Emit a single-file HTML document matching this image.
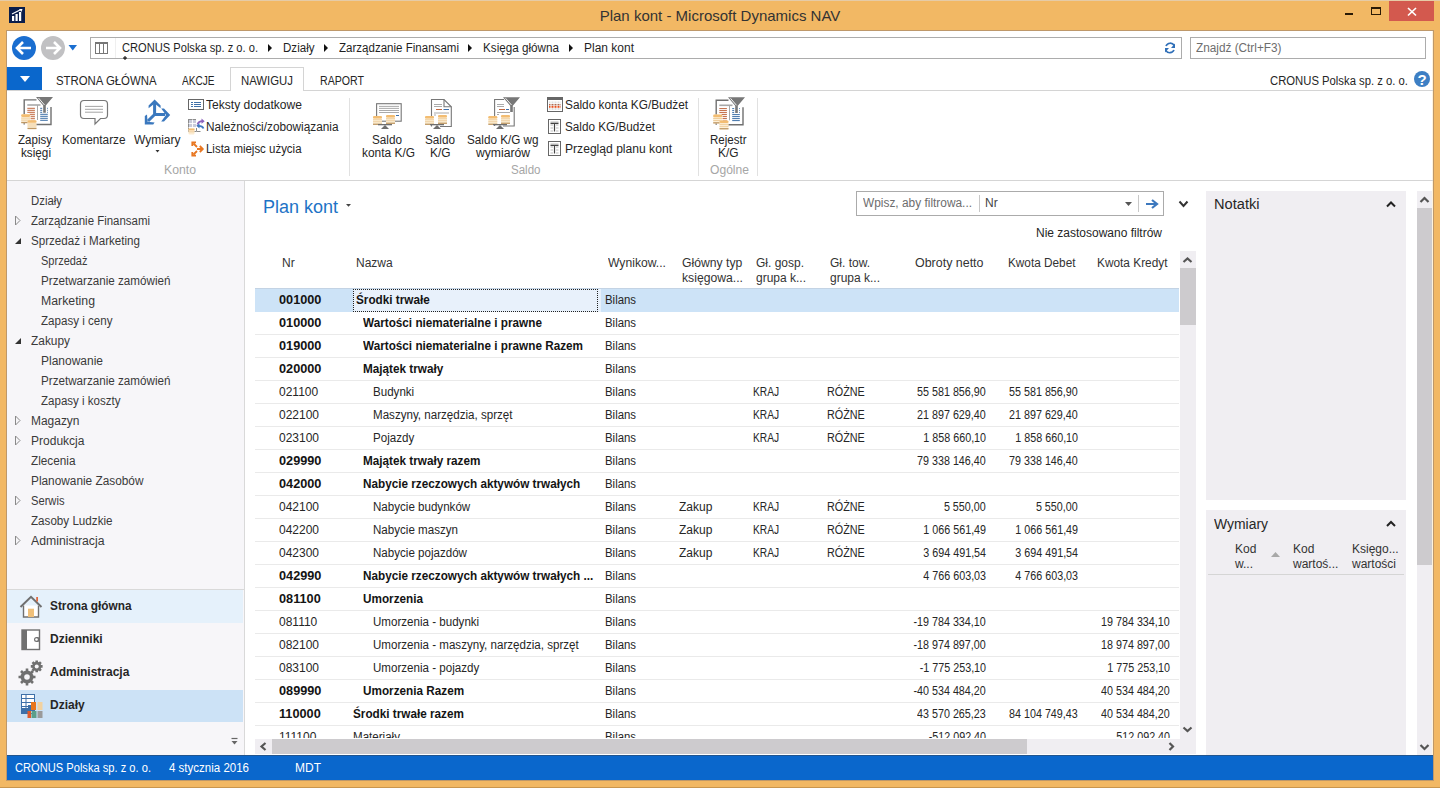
<!DOCTYPE html>
<html><head><meta charset="utf-8">
<style>
*{box-sizing:border-box;margin:0;padding:0}
html,body{width:1440px;height:788px;overflow:hidden}
body{background:#F2B864;font-family:"Liberation Sans",sans-serif;font-size:12px;color:#262626;position:relative}
.a{position:absolute;white-space:nowrap}
#topline{left:0;top:0;width:1440px;height:1px;background:#E6CBA6}
#botline{left:0;top:787px;width:1440px;height:1px;background:#C9964F}
#win{left:7px;top:31px;width:1426px;height:749px;background:#fff}
#title{left:0;top:7px;width:1440px;text-align:center;font-size:15px;color:#333}
#close{left:1389px;top:1px;width:45px;height:20px;background:#D3594E}
/* address */
#addr{left:90px;top:37px;width:1092px;height:22px;border:1px solid #ACACAC;background:#fff}
#search{left:1190px;top:37px;width:236px;height:22px;border:1px solid #ACACAC;background:#fff;color:#6D6D6D;padding:3px 0 0 6px}
.crumb{top:41px;color:#1F1F1F}
/* ribbon */
#tabline{left:7px;top:90px;width:1426px;height:1px;background:#D4D4D4}
#acttab{left:230px;top:67px;width:74px;height:24px;border:1px solid #D4D4D4;border-bottom:none;background:#fff}
.tab{top:74px;color:#262626;font-size:12px}
#ribbtn{left:7px;top:67px;width:35px;height:23px;background:#0A67CC}
#ribbot{left:7px;top:180px;width:1426px;height:1px;background:#D5D5D5}
.rsep{top:98px;width:1px;height:78px;background:#E1E1E1}
.glabel{top:163px;color:#A6A6A6}
.blabel{text-align:center;line-height:13px;color:#262626}
.slabel{color:#262626}
/* nav */
#nav{left:7px;top:181px;width:237px;height:574px;background:#F7F6F9}
#navline{left:244px;top:181px;width:1px;height:574px;background:#D9D9D9}
.ni{color:#3A3A3A}
.nb{font-weight:bold;color:#262626}
/* status */
#status{left:7px;top:755px;width:1426px;height:25px;background:#0A67CC;color:#fff}
/* grid */
.row{left:255px;width:924px;height:23px;border-top:1px solid #EAEAEA}
.c{position:absolute;top:4px;white-space:nowrap}
.b{font-weight:bold;color:#141414}
.num{transform:scaleX(0.895);transform-origin:100% 0}
.fb{background:#F0EEF2}
.sx{transform-origin:0 0}
.nm{transform:scaleX(0.965);transform-origin:0 0}
.nm.b{transform:scaleX(0.978)}
.code.b{transform:scaleX(1.06);transform-origin:0 0}
.hd{color:#333;line-height:15px}
.glabel{top:163px}
#w1{transform:scaleX(0.9269);transform-origin:0 0}
#w2{transform:scaleX(0.9641);transform-origin:0 0}
#w3{transform:scaleX(0.9620);transform-origin:0 0}
#w4{transform:scaleX(0.9736);transform-origin:0 0}
#w5{transform:scaleX(0.9991);transform-origin:0 0}
#w6{transform:scaleX(0.9824);transform-origin:0 0}
#w7{transform:scaleX(0.9480);transform-origin:0 0}
#w8{transform:scaleX(0.8401);transform-origin:0 0}
#w9{transform:scaleX(0.9473);transform-origin:0 0}
#w10{transform:scaleX(0.8836);transform-origin:0 0}
#w11{transform:scaleX(0.9406);transform-origin:0 0}
#w12{transform:scaleX(0.9620);transform-origin:0 0}
#w13{transform:scaleX(0.9776);transform-origin:0 0}
#w14{transform:scaleX(0.9814);transform-origin:0 0}
#w15{transform:scaleX(0.9987);transform-origin:0 0}
#w16{transform:scaleX(1.0064);transform-origin:0 0}
#w17{transform:scaleX(0.9833);transform-origin:0 0}
#w18{transform:scaleX(0.9547);transform-origin:0 0}
#w19{transform:scaleX(1.0204);transform-origin:0 0}
#w20{transform:scaleX(0.9771);transform-origin:0 0}
#w21{transform:scaleX(0.9930);transform-origin:0 0}
#w22{transform:scaleX(0.9771);transform-origin:0 0}
#w23{transform:scaleX(0.9917);transform-origin:0 0}
#w24{transform:scaleX(0.9744);transform-origin:0 0}
#w25{transform:scaleX(1.0123);transform-origin:0 0}
#w26{transform:scaleX(0.9860);transform-origin:0 0}
#w27{transform:scaleX(0.9776);transform-origin:0 0}
#w28{transform:scaleX(1.0087);transform-origin:0 0}
#w29{transform:scaleX(0.9608);transform-origin:0 0}
#w30{transform:scaleX(0.9601);transform-origin:0 0}
#w31{transform:scaleX(0.9917);transform-origin:0 0}
#w32{transform:scaleX(1.0077);transform-origin:0 0}
#w33{transform:scaleX(0.9488);transform-origin:0 0}
#w34{transform:scaleX(0.9540);transform-origin:0 0}
#w35{transform:scaleX(0.9670);transform-origin:0 0}
#w36{transform:scaleX(0.9171);transform-origin:0 0}
#w37{transform:scaleX(0.9708);transform-origin:0 0}
#w38{transform:scaleX(1.0249);transform-origin:0 0}
#w39{transform:scaleX(0.9656);transform-origin:0 0}
#w40{transform:scaleX(0.9909);transform-origin:0 0}
#w41{transform:scaleX(0.9992);transform-origin:0 0}
#w42{transform:scaleX(0.9708);transform-origin:0 0}
#w43{transform:scaleX(0.9613);transform-origin:0 0}
#w44{transform:scaleX(0.9958);transform-origin:0 0}
#w45{transform:scaleX(1.0023);transform-origin:0 0}
#w46{transform:scaleX(0.9811);transform-origin:0 0}
#w47{transform:scaleX(0.9862);transform-origin:0 0}
#w48{transform:scaleX(0.9302);transform-origin:0 0}
#w49{transform:scaleX(0.9697);transform-origin:0 0}
#w50{transform:scaleX(1.0204);transform-origin:0 0}
#w51{transform:scaleX(0.9858);transform-origin:0 0}
#w52{transform:scaleX(0.9269);transform-origin:0 0}
#w53{transform:scaleX(0.9593);transform-origin:0 0}
#w54{transform:scaleX(0.9906);transform-origin:0 0}
#w55{transform:scaleX(0.9995);transform-origin:0 0}
#w56{transform:scaleX(1.0131);transform-origin:0 0}
#w57{transform:scaleX(1.0161);transform-origin:0 0}
#w58{transform:scaleX(0.9994);transform-origin:0 0}
#w59{transform:scaleX(0.9994);transform-origin:0 0}
#w60{transform:scaleX(1.0371);transform-origin:0 0}
#w61{transform:scaleX(0.9823);transform-origin:0 0}
#w62{transform:scaleX(0.9877);transform-origin:0 0}
#w63{transform:scaleX(1.0441);transform-origin:0 0}
#w64{transform:scaleX(0.9942);transform-origin:0 0}
</style></head><body>
<div class="a" id="topline"></div>
<div class="a" id="botline"></div>
<div class="a" style="left:6px;top:30px;width:1428px;height:751px;background:#BE986A"></div>
<div class="a" id="win"></div>
<div class="a" style="left:1432px;top:31px;width:1px;height:749px;background:#FFF3DC"></div>
<!-- title bar -->
<div class="a" id="title">Plan kont - Microsoft Dynamics NAV</div>
<div class="a" style="left:1345px;top:13px;width:8px;height:2px;background:#2A1A05"></div>
<div class="a" style="left:1371px;top:7px;width:10px;height:8px;border:1px solid #2A1A05;border-top-width:2px"></div>
<div class="a" id="close"></div>

<!-- address bar -->
<div class="a" id="addr"></div>
<div class="a" style="left:115px;top:38px;width:1px;height:20px;background:#EFEFEF"></div>
<div class="a crumb" style="left:122px" id="w1">CRONUS Polska sp. z o. o.</div>
<div class="a crumb" style="left:283px" id="w2">Działy</div>
<div class="a crumb" style="left:339px" id="w3">Zarządzanie Finansami</div>
<div class="a crumb" style="left:483px" id="w4">Księga główna</div>
<div class="a crumb" style="left:584px" id="w5">Plan kont</div>
<div class="a" id="search"></div>
<div class="a" style="left:1196px;top:41px;color:#6D6D6D" id="w6">Znajdź (Ctrl+F3)</div>

<!-- ribbon tabs -->
<div class="a" id="tabline"></div>
<div class="a" id="acttab"></div>
<div class="a" id="ribbtn"></div>
<div class="a tab" style="left:56px" id="w7">STRONA GŁÓWNA</div>
<div class="a tab" style="left:182px" id="w8">AKCJE</div>
<div class="a tab" style="left:241px" id="w9">NAWIGUJ</div>
<div class="a tab" style="left:320px" id="w10">RAPORT</div>
<div class="a" style="left:1270px;top:74px;color:#262626" id="w11">CRONUS Polska sp. z o. o.</div>

<!-- ribbon content -->
<div class="a" id="ribbot"></div>
<div class="a rsep" style="left:349px"></div>
<div class="a rsep" style="left:698px"></div>
<div class="a rsep" style="left:757px"></div>
<div class="a blabel" style="left:18px;top:134px" id="w12">Zapisy</div>
<div class="a blabel" style="left:21px;top:147px" id="w13">księgi</div>
<div class="a blabel" style="left:62px;top:134px" id="w14">Komentarze</div>
<div class="a blabel" style="left:134px;top:134px" id="w15">Wymiary</div>
<div class="a slabel" style="left:206px;top:98px" id="w16">Teksty dodatkowe</div>
<div class="a slabel" style="left:206px;top:120px" id="w17">Należności/zobowiązania</div>
<div class="a slabel" style="left:206px;top:142px" id="w18">Lista miejsc użycia</div>
<div class="a glabel" style="left:163.5px" id="w19">Konto</div>

<div class="a blabel" style="left:372px;top:134px" id="w20">Saldo</div>
<div class="a blabel" style="left:361.5px;top:147px" id="w21">konta K/G</div>
<div class="a blabel" style="left:425px;top:134px" id="w22">Saldo</div>
<div class="a blabel" style="left:430px;top:147px" id="w23">K/G</div>
<div class="a blabel" style="left:466.5px;top:134px" id="w24">Saldo K/G wg</div>
<div class="a blabel" style="left:475.5px;top:147px" id="w25">wymiarów</div>
<div class="a slabel" style="left:565px;top:98px" id="w26">Saldo konta KG/Budżet</div>
<div class="a slabel" style="left:565px;top:120px" id="w27">Saldo KG/Budżet</div>
<div class="a slabel" style="left:565px;top:142px" id="w28">Przegląd planu kont</div>
<div class="a glabel" style="left:511px" id="w29">Saldo</div>

<div class="a blabel" style="left:710px;top:134px" id="w30">Rejestr</div>
<div class="a blabel" style="left:718px;top:147px" id="w31">K/G</div>
<div class="a glabel" style="left:710px" id="w32">Ogólne</div>

<!-- nav pane -->
<div class="a" id="nav"></div>
<div class="a" id="navline"></div>
<div class="a ni" style="left:31px;top:194px" id="w33">Działy</div>
<div class="a ni" style="left:31px;top:214px" id="w34">Zarządzanie Finansami</div>
<div class="a ni" style="left:31px;top:234px" id="w35">Sprzedaż i Marketing</div>
<div class="a ni" style="left:41px;top:254px" id="w36">Sprzedaż</div>
<div class="a ni" style="left:41px;top:274px" id="w37">Przetwarzanie zamówień</div>
<div class="a ni" style="left:41px;top:294px" id="w38">Marketing</div>
<div class="a ni" style="left:41px;top:314px" id="w39">Zapasy i ceny</div>
<div class="a ni" style="left:31px;top:334px" id="w40">Zakupy</div>
<div class="a ni" style="left:41px;top:354px" id="w41">Planowanie</div>
<div class="a ni" style="left:41px;top:374px" id="w42">Przetwarzanie zamówień</div>
<div class="a ni" style="left:41px;top:394px" id="w43">Zapasy i koszty</div>
<div class="a ni" style="left:31px;top:414px" id="w44">Magazyn</div>
<div class="a ni" style="left:31px;top:434px" id="w45">Produkcja</div>
<div class="a ni" style="left:31px;top:454px" id="w46">Zlecenia</div>
<div class="a ni" style="left:31px;top:474px" id="w47">Planowanie Zasobów</div>
<div class="a ni" style="left:31px;top:494px" id="w48">Serwis</div>
<div class="a ni" style="left:31px;top:514px" id="w49">Zasoby Ludzkie</div>
<div class="a ni" style="left:31px;top:534px" id="w50">Administracja</div>

<div class="a" style="left:7px;top:589px;width:237px;height:1px;background:#D9D9D9"></div>
<div class="a" style="left:7px;top:590px;width:236px;height:33px;background:#E5F1FB"></div>
<div class="a" style="left:7px;top:690px;width:236px;height:32px;background:#CCE2F6"></div>
<div class="a nb" style="left:50px;top:599px" id="w51">Strona główna</div>
<div class="a nb" style="left:50px;top:632px">Dzienniki</div>
<div class="a nb" style="left:50px;top:665px">Administracja</div>
<div class="a nb" style="left:50px;top:698px">Działy</div>

<!-- status bar -->
<div class="a" id="status"></div>
<div class="a" style="left:7px;top:755px;width:1426px;height:1px;background:#21558F"></div>
<div class="a" style="left:15px;top:761px;color:#fff" id="w52">CRONUS Polska sp. z o. o.</div>
<div class="a" style="left:169px;top:761px;color:#fff" id="w53">4 stycznia 2016</div>
<div class="a" style="left:295px;top:761px;color:#fff">MDT</div>

<!-- page header -->
<div class="a" style="left:263px;top:197px;font-size:18px;color:#1E73C6">Plan kont</div>
<div class="a" style="left:856px;top:191px;width:308px;height:25px;border:1px solid #ABABAB;background:#fff"></div>
<div class="a" style="left:979px;top:195px;width:1px;height:17px;background:#C8C8C8"></div>
<div class="a" style="left:1138px;top:195px;width:1px;height:17px;background:#C8C8C8"></div>
<div class="a" style="left:863px;top:196px;color:#6D6D6D" id="w54">Wpisz, aby filtrowa...</div>
<div class="a" style="left:985px;top:196px;color:#444">Nr</div>
<div class="a" style="left:1036px;top:226px;color:#262626" id="w55">Nie zastosowano filtrów</div>

<!-- column headers -->
<div class="a hd" style="left:282px;top:256px">Nr</div>
<div class="a hd" style="left:356px;top:256px">Nazwa</div>
<div class="a hd" style="left:608px;top:256px" id="w56">Wynikow...</div>
<div class="a hd" style="left:682px;top:256px" id="w57">Główny typ<br>księgowa...</div>
<div class="a hd" style="left:756px;top:256px" id="w58">Gł. gosp.<br>grupa k...</div>
<div class="a hd" style="left:830px;top:256px" id="w59">Gł. tow.<br>grupa k...</div>
<div class="a hd" style="left:915px;top:256px" id="w60">Obroty netto</div>
<div class="a hd" style="left:1008px;top:256px" id="w61">Kwota Debet</div>
<div class="a hd" style="left:1097px;top:256px" id="w62">Kwota Kredyt</div>

<!-- grid scrollbars -->
<div class="a" style="left:1180px;top:251px;width:16px;height:488px;background:#F0EEF2"></div>
<div class="a" style="left:1180px;top:268px;width:16px;height:57px;background:#CDCBCE"></div>
<div class="a" style="left:255px;top:739px;width:941px;height:15px;background:#F0EEF2"></div>
<div class="a" style="left:272px;top:739px;width:755px;height:15px;background:#CDCBCE"></div>

<!-- factboxes -->
<div class="a fb" style="left:1206px;top:191px;width:200px;height:309px"></div>
<div class="a fb" style="left:1206px;top:510px;width:200px;height:245px"></div>
<div class="a" style="left:1214px;top:196px;font-size:14px;color:#262626" id="w63">Notatki</div>
<div class="a" style="left:1214px;top:516px;font-size:14px;color:#262626" id="w64">Wymiary</div>
<div class="a" style="left:1235px;top:542px;line-height:15px;color:#333">Kod<br>w...</div>
<div class="a" style="left:1293px;top:542px;line-height:15px;color:#333">Kod<br>wartoś...</div>
<div class="a" style="left:1352px;top:542px;line-height:15px;color:#333">Księgo...<br>wartości</div>
<div class="a" style="left:1208px;top:574px;width:196px;height:1px;background:#D5D5D5"></div>
<div class="a" style="left:1417px;top:191px;width:15px;height:564px;background:#F0EEF2"></div>
<div class="a" style="left:1417px;top:208px;width:15px;height:357px;background:#CDCBCE"></div>
<div class="a" id="gridclip" style="left:255px;top:288px;width:924px;height:450px;overflow:hidden">
<div class="a row" style="left:0;top:437px;"><span class="c code" style="left:24px">111100</span><span class="c nm" style="left:98px">Materiały</span><span class="c sx" style="left:350px;transform:scaleX(0.95)">Bilans</span><span class="c num" style="right:193px">-512 092,40</span><span class="c num" style="right:9px">512 092,40</span></div>
<div class="a row" style="left:0;top:414px;"><span class="c b code" style="left:24px">110000</span><span class="c b nm" style="left:98px">Środki trwałe razem</span><span class="c sx" style="left:350px;transform:scaleX(0.95)">Bilans</span><span class="c num" style="right:193px">43 570 265,23</span><span class="c num" style="right:101px">84 104 749,43</span><span class="c num" style="right:9px">40 534 484,20</span></div>
<div class="a row" style="left:0;top:391px;"><span class="c b code" style="left:24px">089990</span><span class="c b nm" style="left:108px">Umorzenia Razem</span><span class="c sx" style="left:350px;transform:scaleX(0.95)">Bilans</span><span class="c num" style="right:193px">-40 534 484,20</span><span class="c num" style="right:9px">40 534 484,20</span></div>
<div class="a row" style="left:0;top:368px;"><span class="c code" style="left:24px">083100</span><span class="c nm" style="left:118px">Umorzenia - pojazdy</span><span class="c sx" style="left:350px;transform:scaleX(0.95)">Bilans</span><span class="c num" style="right:193px">-1 775 253,10</span><span class="c num" style="right:9px">1 775 253,10</span></div>
<div class="a row" style="left:0;top:345px;"><span class="c code" style="left:24px">082100</span><span class="c nm" style="left:118px">Umorzenia - maszyny, narzędzia, sprzęt</span><span class="c sx" style="left:350px;transform:scaleX(0.95)">Bilans</span><span class="c num" style="right:193px">-18 974 897,00</span><span class="c num" style="right:9px">18 974 897,00</span></div>
<div class="a row" style="left:0;top:322px;"><span class="c code" style="left:24px">081110</span><span class="c nm" style="left:118px">Umorzenia - budynki</span><span class="c sx" style="left:350px;transform:scaleX(0.95)">Bilans</span><span class="c num" style="right:193px">-19 784 334,10</span><span class="c num" style="right:9px">19 784 334,10</span></div>
<div class="a row" style="left:0;top:299px;"><span class="c b code" style="left:24px">081100</span><span class="c b nm" style="left:108px">Umorzenia</span><span class="c sx" style="left:350px;transform:scaleX(0.95)">Bilans</span></div>
<div class="a row" style="left:0;top:276px;"><span class="c b code" style="left:24px">042990</span><span class="c b nm" style="left:108px">Nabycie rzeczowych aktywów trwałych ...</span><span class="c sx" style="left:350px;transform:scaleX(0.95)">Bilans</span><span class="c num" style="right:193px">4 766 603,03</span><span class="c num" style="right:101px">4 766 603,03</span></div>
<div class="a row" style="left:0;top:253px;"><span class="c code" style="left:24px">042300</span><span class="c nm" style="left:118px">Nabycie pojazdów</span><span class="c sx" style="left:350px;transform:scaleX(0.95)">Bilans</span><span class="c" style="left:424px">Zakup</span><span class="c sx" style="left:498px;transform:scaleX(0.85)">KRAJ</span><span class="c sx" style="left:572px;transform:scaleX(0.9)">RÓŻNE</span><span class="c num" style="right:193px">3 694 491,54</span><span class="c num" style="right:101px">3 694 491,54</span></div>
<div class="a row" style="left:0;top:230px;"><span class="c code" style="left:24px">042200</span><span class="c nm" style="left:118px">Nabycie maszyn</span><span class="c sx" style="left:350px;transform:scaleX(0.95)">Bilans</span><span class="c" style="left:424px">Zakup</span><span class="c sx" style="left:498px;transform:scaleX(0.85)">KRAJ</span><span class="c sx" style="left:572px;transform:scaleX(0.9)">RÓŻNE</span><span class="c num" style="right:193px">1 066 561,49</span><span class="c num" style="right:101px">1 066 561,49</span></div>
<div class="a row" style="left:0;top:207px;"><span class="c code" style="left:24px">042100</span><span class="c nm" style="left:118px">Nabycie budynków</span><span class="c sx" style="left:350px;transform:scaleX(0.95)">Bilans</span><span class="c" style="left:424px">Zakup</span><span class="c sx" style="left:498px;transform:scaleX(0.85)">KRAJ</span><span class="c sx" style="left:572px;transform:scaleX(0.9)">RÓŻNE</span><span class="c num" style="right:193px">5 550,00</span><span class="c num" style="right:101px">5 550,00</span></div>
<div class="a row" style="left:0;top:184px;"><span class="c b code" style="left:24px">042000</span><span class="c b nm" style="left:108px">Nabycie rzeczowych aktywów trwałych</span><span class="c sx" style="left:350px;transform:scaleX(0.95)">Bilans</span></div>
<div class="a row" style="left:0;top:161px;"><span class="c b code" style="left:24px">029990</span><span class="c b nm" style="left:108px">Majątek trwały razem</span><span class="c sx" style="left:350px;transform:scaleX(0.95)">Bilans</span><span class="c num" style="right:193px">79 338 146,40</span><span class="c num" style="right:101px">79 338 146,40</span></div>
<div class="a row" style="left:0;top:138px;"><span class="c code" style="left:24px">023100</span><span class="c nm" style="left:118px">Pojazdy</span><span class="c sx" style="left:350px;transform:scaleX(0.95)">Bilans</span><span class="c sx" style="left:498px;transform:scaleX(0.85)">KRAJ</span><span class="c sx" style="left:572px;transform:scaleX(0.9)">RÓŻNE</span><span class="c num" style="right:193px">1 858 660,10</span><span class="c num" style="right:101px">1 858 660,10</span></div>
<div class="a row" style="left:0;top:115px;"><span class="c code" style="left:24px">022100</span><span class="c nm" style="left:118px">Maszyny, narzędzia, sprzęt</span><span class="c sx" style="left:350px;transform:scaleX(0.95)">Bilans</span><span class="c sx" style="left:498px;transform:scaleX(0.85)">KRAJ</span><span class="c sx" style="left:572px;transform:scaleX(0.9)">RÓŻNE</span><span class="c num" style="right:193px">21 897 629,40</span><span class="c num" style="right:101px">21 897 629,40</span></div>
<div class="a row" style="left:0;top:92px;"><span class="c code" style="left:24px">021100</span><span class="c nm" style="left:118px">Budynki</span><span class="c sx" style="left:350px;transform:scaleX(0.95)">Bilans</span><span class="c sx" style="left:498px;transform:scaleX(0.85)">KRAJ</span><span class="c sx" style="left:572px;transform:scaleX(0.9)">RÓŻNE</span><span class="c num" style="right:193px">55 581 856,90</span><span class="c num" style="right:101px">55 581 856,90</span></div>
<div class="a row" style="left:0;top:69px;"><span class="c b code" style="left:24px">020000</span><span class="c b nm" style="left:108px">Majątek trwały</span><span class="c sx" style="left:350px;transform:scaleX(0.95)">Bilans</span></div>
<div class="a row" style="left:0;top:46px;"><span class="c b code" style="left:24px">019000</span><span class="c b nm" style="left:108px">Wartości niematerialne i prawne Razem</span><span class="c sx" style="left:350px;transform:scaleX(0.95)">Bilans</span></div>
<div class="a row" style="left:0;top:23px;"><span class="c b code" style="left:24px">010000</span><span class="c b nm" style="left:108px">Wartości niematerialne i prawne</span><span class="c sx" style="left:350px;transform:scaleX(0.95)">Bilans</span></div>
<div class="a row" style="left:0;top:0px;background:#CDE3F7;height:24px;border-top-color:#C3D3E4;"><span class="c b code" style="left:24px">001000</span><div class="a" style="left:98px;top:0;width:248px;height:23px;background:#E8F1FB"></div><div class="a" style="left:98px;top:0;width:245px;height:23px;border:1px dotted #222"></div><span class="c b nm" style="left:101px">Środki trwałe</span><span class="c sx" style="left:350px;transform:scaleX(0.95)">Bilans</span></div>
</div><svg class="a" style="left:0;top:0" width="1440" height="788" viewBox="0 0 1440 788">


<!-- title bar icon -->
<rect x="9" y="7" width="16" height="16" fill="#0B1E4B"/>
<g fill="#fff"><rect x="12" y="16" width="2.2" height="5"/><rect x="15.5" y="14" width="2.2" height="7"/><rect x="19" y="12" width="2.2" height="9"/></g>
<path d="M12 14 L21 9.5" stroke="#fff" stroke-width="1.2"/><path d="M19 9 L22.5 9 L21.5 12 Z" fill="#fff"/>
<!-- close X -->
<path d="M1408 8 L1416 15.5 M1416 8 L1408 15.5" stroke="#fff" stroke-width="1.7"/>

<!-- back / forward -->
<circle cx="24" cy="48" r="12" fill="#1A6ED0"/>
<path d="M17 48 H31 M23 42 L17 48 L23 54" fill="none" stroke="#fff" stroke-width="2.6" stroke-linejoin="miter"/>
<circle cx="53" cy="48" r="12" fill="#C1C1C3"/>
<path d="M46 48 H60 M54 42 L60 48 L54 54" fill="none" stroke="#fff" stroke-width="2.6"/>
<path d="M68.5 45 H77 L72.75 50.5 Z" fill="#1A6ED0"/>
<!-- address table icon -->
<rect x="95.5" y="42.5" width="12" height="11" fill="none" stroke="#777" stroke-width="1"/>
<rect x="95" y="42" width="13" height="2" fill="#777"/>
<path d="M99.5 44 V53.5 M103.5 44 V53.5" stroke="#777" stroke-width="1"/>
<!-- crumb arrows -->
<g fill="#111">
<path d="M268 44 L272 48 L268 52 Z"/><path d="M324 44 L328 48 L324 52 Z"/><path d="M468 44 L472 48 L468 52 Z"/><path d="M569 44 L573 48 L569 52 Z"/>
</g>
<!-- refresh -->
<g fill="none" stroke="#2F6FB8" stroke-width="1.7">
<path d="M1166 46 A4.6 4.6 0 0 1 1174.2 45.5"/><path d="M1174 50 A4.6 4.6 0 0 1 1165.8 50.4"/>
</g>
<path d="M1175 43.5 V48 H1171 Z M1165 52.5 V48 H1169 Z" fill="#2F6FB8"/>

<!-- ribbon menu triangle -->
<path d="M20 76 H30 L25 82 Z" fill="#fff"/>
<!-- help -->
<circle cx="1422" cy="79" r="8" fill="#3D7FC4"/>
<text x="1422" y="85" text-anchor="middle" font-family="Liberation Sans" font-weight="bold" font-size="15" fill="#fff">?</text>

<!-- ribbon icons -->
<g transform="translate(20,97)">
  <!-- local origin: doc top-left region; size ~34x33 -->
  <path d="M4.2 27.5 V2.9 H16.5 M31 10 V27.5 H16" fill="none" stroke="#707070" stroke-width="1.4"/>
  <rect x="7.3" y="7.2" width="13.2" height="1.6" fill="#A8A8A8"/>
  <rect x="17" y="8" width="1" height="15" fill="#A8A8A8"/>
  <g fill="#C0663F">
   <rect x="7.3" y="10.8" width="7.6" height="1"/><rect x="7.3" y="12.8" width="7.6" height="1"/><rect x="7.3" y="14.8" width="7.6" height="1"/>
   <rect x="9.5" y="16.8" width="5.4" height="1"/><rect x="10.5" y="18.8" width="4.4" height="1"/><rect x="10.5" y="20.8" width="4.4" height="1"/><rect x="10.5" y="22.8" width="4.4" height="1"/>
  </g>
  <g fill="#3E70A8">
   <rect x="20.2" y="10.8" width="2" height="1"/><rect x="20.2" y="12.8" width="2" height="1"/><rect x="20.2" y="14.8" width="2" height="1"/>
   <rect x="27" y="10.8" width="0.8" height="1"/><rect x="27" y="12.8" width="0.8" height="1"/><rect x="27" y="14.8" width="0.8" height="1"/>
   <rect x="20.2" y="16.8" width="7.6" height="1"/><rect x="20.2" y="18.8" width="7.6" height="1"/><rect x="20.2" y="20.8" width="7.6" height="1"/><rect x="20.2" y="22.8" width="7.6" height="1"/>
  </g>
  <path d="M16 0 H33 L25.8 8.5 V15.8 H23.2 V8.5 Z" fill="#777"/>
  <path d="M18.5 1 L24.5 8" stroke="#fff" stroke-width="0.9"/>
  <g transform="translate(1.2,17.3)">
  <rect x="0" y="0" width="9" height="9" rx="1.2" fill="#FDF0D8"/>
  <rect x="0" y="0" width="9" height="2.6" rx="1.3" fill="#F3BD72"/>
  <rect x="0" y="3.4" width="9" height="0.8" fill="#EBC690"/>
  <rect x="0" y="5.4" width="9" height="0.8" fill="#EBC690"/>
  <rect x="0" y="7.6" width="9" height="1.3" fill="#BF9864"/></g>
  <g transform="translate(7.5,23.2)">
  <rect x="0" y="0" width="9" height="9" rx="1.2" fill="#FDF0D8"/>
  <rect x="0" y="0" width="9" height="2.6" rx="1.3" fill="#F3BD72"/>
  <rect x="0" y="3.4" width="9" height="0.8" fill="#EBC690"/>
  <rect x="0" y="5.4" width="9" height="0.8" fill="#EBC690"/>
  <rect x="0" y="7.6" width="9" height="1.3" fill="#BF9864"/></g></g>
<g transform="translate(712,97.3)">
  <!-- local origin: doc top-left region; size ~34x33 -->
  <path d="M4.2 27.5 V2.9 H16.5 M31 10 V27.5 H16" fill="none" stroke="#707070" stroke-width="1.4"/>
  <rect x="7.3" y="7.2" width="13.2" height="1.6" fill="#A8A8A8"/>
  <rect x="17" y="8" width="1" height="15" fill="#A8A8A8"/>
  <g fill="#C0663F">
   <rect x="7.3" y="10.8" width="7.6" height="1"/><rect x="7.3" y="12.8" width="7.6" height="1"/><rect x="7.3" y="14.8" width="7.6" height="1"/>
   <rect x="9.5" y="16.8" width="5.4" height="1"/><rect x="10.5" y="18.8" width="4.4" height="1"/><rect x="10.5" y="20.8" width="4.4" height="1"/><rect x="10.5" y="22.8" width="4.4" height="1"/>
  </g>
  <g fill="#3E70A8">
   <rect x="20.2" y="10.8" width="2" height="1"/><rect x="20.2" y="12.8" width="2" height="1"/><rect x="20.2" y="14.8" width="2" height="1"/>
   <rect x="27" y="10.8" width="0.8" height="1"/><rect x="27" y="12.8" width="0.8" height="1"/><rect x="27" y="14.8" width="0.8" height="1"/>
   <rect x="20.2" y="16.8" width="7.6" height="1"/><rect x="20.2" y="18.8" width="7.6" height="1"/><rect x="20.2" y="20.8" width="7.6" height="1"/><rect x="20.2" y="22.8" width="7.6" height="1"/>
  </g>
  <path d="M16 0 H33 L25.8 8.5 V15.8 H23.2 V8.5 Z" fill="#777"/>
  <path d="M18.5 1 L24.5 8" stroke="#fff" stroke-width="0.9"/>
  <g transform="translate(1.2,17.3)">
  <rect x="0" y="0" width="9" height="9" rx="1.2" fill="#FDF0D8"/>
  <rect x="0" y="0" width="9" height="2.6" rx="1.3" fill="#F3BD72"/>
  <rect x="0" y="3.4" width="9" height="0.8" fill="#EBC690"/>
  <rect x="0" y="5.4" width="9" height="0.8" fill="#EBC690"/>
  <rect x="0" y="7.6" width="9" height="1.3" fill="#BF9864"/></g>
  <g transform="translate(7.5,23.2)">
  <rect x="0" y="0" width="9" height="9" rx="1.2" fill="#FDF0D8"/>
  <rect x="0" y="0" width="9" height="2.6" rx="1.3" fill="#F3BD72"/>
  <rect x="0" y="3.4" width="9" height="0.8" fill="#EBC690"/>
  <rect x="0" y="5.4" width="9" height="0.8" fill="#EBC690"/>
  <rect x="0" y="7.6" width="9" height="1.3" fill="#BF9864"/></g></g>
<!-- comment -->
<path d="M84 100.5 H104 A3.5 3.5 0 0 1 107.5 104 V115 A3.5 3.5 0 0 1 104 118.5 H100.5 L95 124 V118.5 H84 A3.5 3.5 0 0 1 80.5 115 V104 A3.5 3.5 0 0 1 84 100.5 Z" fill="#fff" stroke="#777" stroke-width="1.2"/>
<path d="M85 106.4 H103 M85 109.3 H103 M85 112.2 H103" stroke="#9A9A9A" stroke-width="0.9"/>
<!-- dimensions -->
<g fill="none" stroke="#3A78BE" stroke-width="3">
<path d="M154.6 115.5 V103 M153.2 114.5 H165 M155.6 113.5 L148 121"/>
</g>
<path d="M154.6 99.5 L160.6 105.6 L160.6 108.2 L154.6 103.6 L148.6 108.2 L148.6 105.6 Z" fill="#3A78BE"/>
<path d="M170.2 115 L164 108.6 L161.2 108.6 L166 115 L161.2 121.4 L164 121.4 Z" fill="#3A78BE"/>
<path d="M144.8 124.6 L144.8 116 L147 114.6 L147.6 121.8 L154.6 122.4 L153.2 124.6 Z" fill="#3A78BE"/>
<path d="M155.5 150 H159.5 L157.5 152.5 Z" fill="#333"/>
<!-- small icons konto -->
<rect x="188.5" y="99.5" width="15" height="10" fill="#fff" stroke="#666" stroke-width="1"/>
<g fill="#3E70A8"><rect x="191" y="102" width="2" height="1"/><rect x="194" y="102" width="7" height="1"/><rect x="191" y="104" width="2" height="1"/><rect x="194" y="104" width="7" height="1"/><rect x="191" y="106" width="2" height="1"/><rect x="194" y="106" width="7" height="1"/></g>
<g>
<rect x="188.5" y="119.5" width="12" height="12" fill="#fff" stroke="#8C8C8C" stroke-width="1"/>
<rect x="189" y="120" width="11" height="7.5" fill="#C9CBDA"/>
<path d="M188.5 123.5 H200.5 M188.5 127.5 H200.5 M192.5 119.5 V131.5 M196.5 119.5 V131.5" stroke="#fff" stroke-width="0.9"/>
<rect x="196" y="118" width="9" height="14" fill="#fff"/>
<path d="M197.5 124.5 Q198.5 121.2 202.5 121.2" fill="none" stroke="#8B62BC" stroke-width="1.8"/><path d="M201.5 118.6 L204.7 121.2 L201.5 123.8 Z" fill="#8B62BC"/>
<path d="M203.5 128.5 Q202.5 125.8 198.5 125.8" fill="none" stroke="#3E78C0" stroke-width="1.8"/><path d="M199.5 123.2 L196.3 125.8 L199.5 128.4 Z" fill="#3E78C0"/>
<path d="M196.5 128 V131.5 H200.5" fill="none" stroke="#8C8C8C" stroke-width="1"/>
<rect x="188.5" y="128.5" width="6" height="6" rx="1" fill="#FCEBD0"/><rect x="188.5" y="128.5" width="6" height="1.8" fill="#F3BD72"/><rect x="188.5" y="131.5" width="6" height="0.7" fill="#EBC690"/>
</g>
<g fill="none" stroke="#E87722" stroke-width="1.8">
<path d="M193.5 143.5 L197 147 M192.3 146 V142.3 H196"/>
<path d="M197 149 H202.5 M199.8 146 L202.8 149 L199.8 152"/>
<path d="M193.5 154.5 L197 151 M192.3 152 V155.7 H196"/>
</g>

<!-- saldo konta K/G -->
<rect x="376.6" y="103.7" width="24.6" height="17.5" fill="#fff" stroke="#777" stroke-width="1.1"/>
<path d="M379 106.4 H399 M379 108.4 H399 M379 110.5 H399 M379 112.5 H399" stroke="#A0A0A0" stroke-width="0.9"/>
<rect x="396" y="115" width="3" height="1" fill="#3E70A8"/>
<g transform="translate(373,116)">
  <rect x="0" y="0" width="9" height="9" rx="1.2" fill="#FDF0D8"/>
  <rect x="0" y="0" width="9" height="2.6" rx="1.3" fill="#F3BD72"/>
  <rect x="0" y="3.4" width="9" height="0.8" fill="#EBC690"/>
  <rect x="0" y="5.4" width="9" height="0.8" fill="#EBC690"/>
  <rect x="0" y="7.6" width="9" height="1.3" fill="#BF9864"/></g>
<g transform="translate(386,115)">
  <rect x="0" y="0" width="9" height="9" rx="1.2" fill="#FDF0D8"/>
  <rect x="0" y="0" width="9" height="2.6" rx="1.3" fill="#F3BD72"/>
  <rect x="0" y="3.4" width="9" height="0.8" fill="#EBC690"/>
  <rect x="0" y="5.4" width="9" height="0.8" fill="#EBC690"/>
  <rect x="0" y="7.6" width="9" height="1.3" fill="#BF9864"/></g>
<g transform="translate(384,124)">
  <rect x="-6" y="0" width="14" height="1.3" fill="#6E6E6E"/>
  <path d="M-3 5 L1 1 L5 5 Z" fill="#6E6E6E"/></g>
<!-- saldo K/G -->
<path d="M431.5 126.5 V99.5 H444 L451.3 106.8 V126.5 H440" fill="#fff" stroke="#777" stroke-width="1.1"/>
<path d="M444 99.5 V106.8 H451.3" fill="none" stroke="#777" stroke-width="1.1"/>
<path d="M434 104.5 H442 M434 106.5 H442 M434 113 H449 M434 115 H436" stroke="#A0A0A0" stroke-width="0.9"/>
<path d="M436 109.5 H442 " stroke="#C0663F" stroke-width="1"/><path d="M443.5 109.5 H449" stroke="#3E70A8" stroke-width="1"/>
<g transform="translate(425,116)">
  <rect x="0" y="0" width="9" height="9" rx="1.2" fill="#FDF0D8"/>
  <rect x="0" y="0" width="9" height="2.6" rx="1.3" fill="#F3BD72"/>
  <rect x="0" y="3.4" width="9" height="0.8" fill="#EBC690"/>
  <rect x="0" y="5.4" width="9" height="0.8" fill="#EBC690"/>
  <rect x="0" y="7.6" width="9" height="1.3" fill="#BF9864"/></g>
<g transform="translate(438,115)">
  <rect x="0" y="0" width="9" height="9" rx="1.2" fill="#FDF0D8"/>
  <rect x="0" y="0" width="9" height="2.6" rx="1.3" fill="#F3BD72"/>
  <rect x="0" y="3.4" width="9" height="0.8" fill="#EBC690"/>
  <rect x="0" y="5.4" width="9" height="0.8" fill="#EBC690"/>
  <rect x="0" y="7.6" width="9" height="1.3" fill="#BF9864"/></g>
<g transform="translate(436,124)">
  <rect x="-6" y="0" width="14" height="1.3" fill="#6E6E6E"/>
  <path d="M-3 5 L1 1 L5 5 Z" fill="#6E6E6E"/></g>
<!-- saldo K/G wg wymiarow -->
<path d="M494.6 126 V99.5 H504 M514.2 107 V126 H503" fill="#fff" stroke="#777" stroke-width="1.1"/>
<path d="M497 104.5 H504 M497 106.5 H504 M497 112.5 H510 M497 114.5 H499" stroke="#A0A0A0" stroke-width="0.9"/>
<path d="M499 109.5 H505" stroke="#C0663F" stroke-width="1"/><path d="M506 109.5 H509" stroke="#3E70A8" stroke-width="1"/>
<path d="M503 97.2 H520 L512.8 105.8 V112 H510.2 V105.8 Z" fill="#777"/>
<path d="M505.5 98.2 L511.5 105" stroke="#fff" stroke-width="0.9"/>
<g transform="translate(488.3,116)">
  <rect x="0" y="0" width="9" height="9" rx="1.2" fill="#FDF0D8"/>
  <rect x="0" y="0" width="9" height="2.6" rx="1.3" fill="#F3BD72"/>
  <rect x="0" y="3.4" width="9" height="0.8" fill="#EBC690"/>
  <rect x="0" y="5.4" width="9" height="0.8" fill="#EBC690"/>
  <rect x="0" y="7.6" width="9" height="1.3" fill="#BF9864"/></g>
<g transform="translate(501,115)">
  <rect x="0" y="0" width="9" height="9" rx="1.2" fill="#FDF0D8"/>
  <rect x="0" y="0" width="9" height="2.6" rx="1.3" fill="#F3BD72"/>
  <rect x="0" y="3.4" width="9" height="0.8" fill="#EBC690"/>
  <rect x="0" y="5.4" width="9" height="0.8" fill="#EBC690"/>
  <rect x="0" y="7.6" width="9" height="1.3" fill="#BF9864"/></g>
<g transform="translate(499,124)">
  <rect x="-6" y="0" width="14" height="1.3" fill="#6E6E6E"/>
  <path d="M-3 5 L1 1 L5 5 Z" fill="#6E6E6E"/></g>
<!-- small saldo icons -->
<rect x="547.5" y="97.5" width="15" height="14" fill="#fff" stroke="#666" stroke-width="1"/>
<rect x="547" y="97" width="16" height="3" fill="#666"/>
<g fill="#E0E0E0"><rect x="549" y="101.5" width="12" height="2"/><rect x="549" y="108" width="12" height="2"/></g>
<g fill="#B06A50"><rect x="549" y="104" width="12" height="1.5"/></g>
<g fill="#E8501E"><rect x="549" y="106" width="12" height="1.8"/></g>
<path d="M551 101 V111 M554 101 V111 M557 101 V111 M560 101 V111" stroke="#fff" stroke-width="1"/>
<g>
<rect x="548.5" y="119.5" width="12" height="14" fill="#fff" stroke="#666" stroke-width="1"/>
<path d="M550.5 122 H558.5 M550.5 125 H553 M556 125 H558.5 M550.5 128 H553 M556 128 H558.5 M550.5 131 H553 M556 131 H558.5" stroke="#AAA" stroke-width="0.8"/>
<path d="M550.5 123.3 H558.5 M554.5 123.3 V131.5" stroke="#444" stroke-width="1.2"/>
</g>
<g transform="translate(0,22)">
<rect x="548.5" y="119.5" width="12" height="14" fill="#fff" stroke="#666" stroke-width="1"/>
<path d="M550.5 122 H558.5 M550.5 125 H553 M556 125 H558.5 M550.5 128 H553 M556 128 H558.5 M550.5 131 H553 M556 131 H558.5" stroke="#AAA" stroke-width="0.8"/>
<path d="M550.5 123.3 H558.5 M554.5 123.3 V131.5" stroke="#444" stroke-width="1.2"/>
</g>

<!-- nav triangles -->
<g fill="none" stroke="#8A8A8A" stroke-width="1">
<path d="M15.5 216 L20 220.5 L15.5 225 Z"/>
<path d="M15.5 416 L20 420.5 L15.5 425 Z"/>
<path d="M15.5 436 L20 440.5 L15.5 445 Z"/>
<path d="M15.5 496 L20 500.5 L15.5 505 Z"/>
<path d="M15.5 536 L20 540.5 L15.5 545 Z"/>
</g>
<g fill="#333"><path d="M15 244 L21 238 V244 Z"/><path d="M15 344 L21 338 V344 Z"/></g>

<!-- nav button icons -->
<path d="M20.5 607 L31 596.8 L41.5 607" fill="none" stroke="#707070" stroke-width="2"/>
<path d="M23.5 605.5 V617 H38.5 V605.5" fill="#fff" stroke="#707070" stroke-width="1.4"/>
<rect x="28" y="608.7" width="6" height="8.3" fill="#EFC07A"/>
<rect x="36.3" y="597" width="1.6" height="4.5" fill="#E05A2B"/>
<rect x="22" y="630" width="17.5" height="19.5" fill="#fff" stroke="#707070" stroke-width="1.4"/>
<rect x="22" y="630" width="5" height="19.5" fill="#707070"/>
<rect x="34" y="637" width="6" height="5" rx="2.5" fill="#707070"/><circle cx="36.5" cy="639.5" r="1.3" fill="#fff"/>
<g fill="#707070">
<circle cx="27" cy="677" r="6.5"/><circle cx="36.7" cy="666.4" r="4.6"/>
</g>
<g stroke="#707070" stroke-width="2.6">
<path d="M27 668.5 V685.5 M18.5 677 H35.5 M21 671 L33 683 M33 671 L21 683"/>
<path d="M36.7 660.5 V672.3 M30.8 666.4 H42.6 M32.5 662.2 L40.9 670.6 M40.9 662.2 L32.5 670.6"/>
</g>
<circle cx="27" cy="677" r="2.8" fill="#F7F6F9"/><circle cx="36.7" cy="666.4" r="2" fill="#F7F6F9"/>
<!-- działy icon -->
<rect x="21.5" y="694.5" width="13" height="19" fill="#fff" stroke="#3E70A8" stroke-width="1"/>
<path d="M21.5 698.5 H34.5 M21.5 702.5 H34.5 M21.5 706.5 H34.5 M21.5 710.5 H34.5 M26 694.5 V713.5" stroke="#3E70A8" stroke-width="1"/>
<rect x="21.5" y="708" width="9" height="5.5" fill="#3E70A8"/>
<rect x="28" y="705" width="3" height="13" fill="#3E70A8"/>
<rect x="31" y="702" width="5" height="8" fill="#E8761E"/>
<rect x="37.5" y="702" width="5" height="8" fill="#F2D2A0"/>
<rect x="27.5" y="711" width="3.5" height="7" fill="#E05A2B"/>
<rect x="31.5" y="711" width="5" height="7" fill="#5C9F8A"/>
<rect x="37.5" y="711" width="5" height="7" fill="#9A9A9A"/>
<!-- nav bottom chooser -->
<path d="M231.5 738.5 H237.5" stroke="#666" stroke-width="1.2"/><path d="M231.5 741 H237.5 L234.5 744.5 Z" fill="#666"/>

<!-- plan kont dropdown -->
<path d="M346 204 H351 L348.5 206.8 Z" fill="#444"/>
<!-- filter -->
<path d="M1125 202 H1132 L1128.5 206 Z" fill="#555"/>
<path d="M1146 204 H1156" stroke="#3C78BE" stroke-width="2"/>
<path d="M1152 200 L1157 204 L1152 208" fill="none" stroke="#3C78BE" stroke-width="2.2"/>
<path d="M1179.5 201.5 L1183.5 206 L1187.5 201.5" fill="none" stroke="#333" stroke-width="2"/>
<!-- chevrons -->
<path d="M1183.5 262 L1187.5 258.5 L1191.5 262" fill="none" stroke="#555" stroke-width="2.2"/>
<path d="M1183.5 727.5 L1187.5 731 L1191.5 727.5" fill="none" stroke="#555" stroke-width="2.2"/>
<path d="M265.5 743 L261.5 746.5 L265.5 750" fill="none" stroke="#555" stroke-width="2.2"/>
<path d="M1169.5 743 L1173 746.5 L1169.5 750" fill="none" stroke="#555" stroke-width="2.2"/>
<path d="M1387 206.5 L1391 202.5 L1395 206.5" fill="none" stroke="#222" stroke-width="2"/>
<path d="M1387 526 L1391 522 L1395 526" fill="none" stroke="#222" stroke-width="2"/>
<path d="M1420.5 202 L1424.5 198 L1428.5 202" fill="none" stroke="#555" stroke-width="2.2"/>
<path d="M1420.5 745 L1424.5 749 L1428.5 745" fill="none" stroke="#555" stroke-width="2.2"/>
<path d="M1271 557 H1280 L1275.5 552 Z" fill="#A8A8A8"/>
<!-- cursor mark -->
<path d="M125 56 V60 M123 58 H127" stroke="#000" stroke-width="1"/>
</svg>

</body></html>
